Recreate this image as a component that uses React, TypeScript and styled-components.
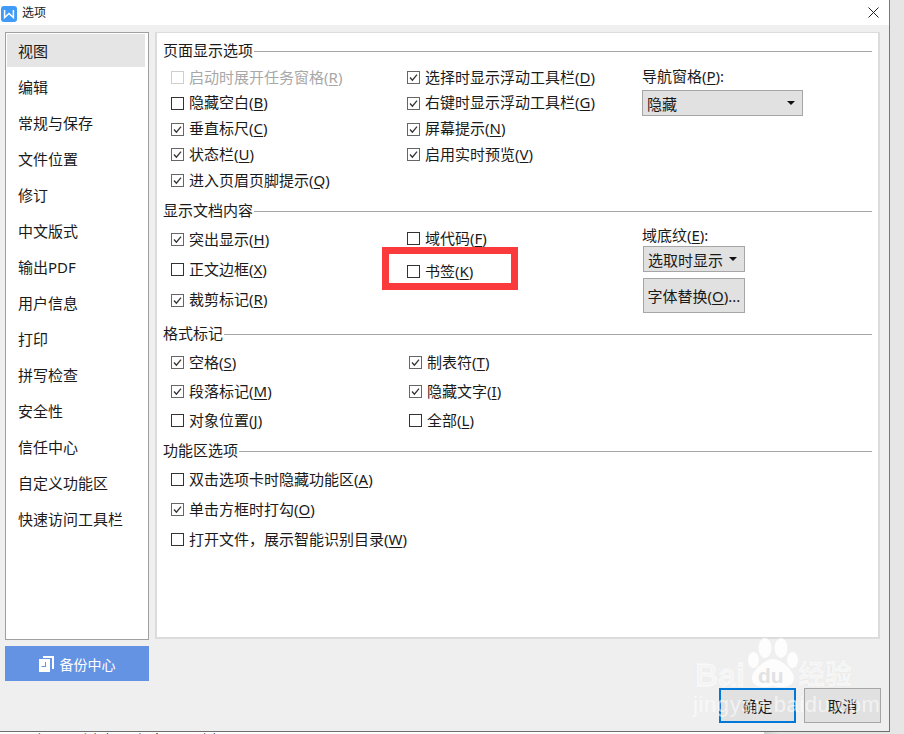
import React from "react";
import styled, { createGlobalStyle } from "styled-components";

const Global = createGlobalStyle`
  html, body { margin: 0; padding: 0; background: #e6e6e6; }
  body { font-family: "Noto Sans", "Noto Sans CJK SC", sans-serif; color: #1a1a1a; }
  * { box-sizing: border-box; }
`;

const Screen = styled.div`
  position: relative;
  width: 904px;
  height: 734px;
  overflow: hidden;
  display: flex;
  flex-direction: column;
`;
const Upper = styled.div`
  height: 732px;
  display: flex;
  flex: none;
`;
const Dialog = styled.div`
  width: 890px;
  height: 732px;
  background: #efefef;
  border-right: 1px solid #777;
  border-bottom: 1px solid #6e6e6e;
  display: flex;
  flex-direction: column;
`;
const TitleBar = styled.div`
  height: 25px;
  flex: none;
  background: #fff;
  display: flex;
  align-items: center;
  padding: 0 10px 0 1px;
`;
const AppLogo = styled.svg`
  width: 16px;
  height: 16px;
  margin-top: 2px;
  flex: none;
`;
const TitleText = styled.span`
  margin-left: 5px;
  font-size: 12px;
  line-height: 22px;
  flex: 1;
`;
const Close = styled.svg`
  width: 11px;
  height: 11px;
  flex: none;
`;
const Body = styled.div`
  flex: none;
  display: grid;
  grid-template-columns: 144px 725px;
  column-gap: 6px;
  padding: 7px 0 0 5px;
  align-content: start;
`;
const Sidebar = styled.nav`
  height: 608px;
  background: #fff;
  border: 1px solid #a0a0a0;
  padding: 1px;
  display: flex;
  flex-direction: column;
`;
const NavItem = styled.div<{ $active?: boolean }>`
  height: ${(p) => (p.$active ? "33px" : "36px")};
  margin-bottom: ${(p) => (p.$active ? "1px" : "0")};
  margin-right: 2px;
  padding: 1px 0 0 11px;
  font-size: 15px;
  line-height: ${(p) => (p.$active ? "33px" : "36px")};
  background: ${(p) => (p.$active ? "#e5e5e5" : "transparent")};
  flex: none;
`;
const Panel = styled.main`
  height: 607px;
  background: #fff;
  border: 2px solid #dcdcdc;
  border-top-width: 1px;
  padding: 8px 6px 0 6px;
  display: flex;
  flex-direction: column;
`;
const Section = styled.section<{ $height: number }>`
  height: ${(p) => p.$height}px;
  flex: none;
`;
const SectionHead = styled.div`
  height: 20px;
  display: flex;
  align-items: center;
  font-size: 15px;
  gap: 1px;
  line-height: 18px;
  & > span {
    margin-top: -3px;
  }
  &::after {
    content: "";
    flex: 1;
    height: 1px;
    background: #a6a6a6;
    margin-top: 1px;
  }
`;
const Columns = styled.div<{ $mid: number }>`
  display: grid;
  grid-template-columns: ${(p) => p.$mid}px ${(p) => 479 - p.$mid}px 1fr;
`;
const Col = styled.div<{ $top: number; $pitch: number }>`
  padding-top: ${(p) => p.$top}px;
  display: grid;
  grid-auto-rows: ${(p) => p.$pitch}px;
`;
const Option = styled.label<{ $off?: boolean }>`
  height: 20px;
  display: flex;
  align-items: center;
  gap: 5px;
  padding-left: 8px;
  font-size: 15px;
  white-space: nowrap;
  color: ${(p) => (p.$off ? "#a8a8a8" : "#1a1a1a")};
`;
const Box = styled.span<{ $on?: boolean; $off?: boolean }>`
  width: 13px;
  height: 13px;
  flex: none;
  display: flex;
  margin-top: 1px;
  border: 1px solid ${(p) => (p.$off ? "#cfcfcf" : p.$on ? "#666" : "#333")};
  background: #fff;
`;
const Tick = styled.svg`
  width: 11px;
  height: 11px;
`;
const Label = styled.span`
  margin-top: -2px;
`;
const Key = styled.span`
  text-decoration: underline;
  text-underline-offset: 2px;
`;
const Side = styled.div<{ $top: number }>`
  padding-top: ${(p) => p.$top}px;
  font-size: 15px;
  display: flex;
  flex-direction: column;
  align-items: flex-start;
`;
const FieldLabel = styled.div`
  height: 20px;
  line-height: 18px;
  white-space: nowrap;
`;
const Select = styled.div<{ $w: number; $ml?: number; $mt: number }>`
  width: ${(p) => p.$w}px;
  height: 26px;
  margin: ${(p) => p.$mt}px 0 0 ${(p) => p.$ml ?? 0}px;
  background: #e1e1e1;
  border: 1px solid #a6a6a6;
  padding: 0 7px 0 4px;
  display: flex;
  align-items: center;
  justify-content: space-between;
  white-space: nowrap;
`;
const Caret = styled.span`
  width: 0;
  height: 0;
  border-left: 4px solid transparent;
  border-right: 4px solid transparent;
  border-top: 4px solid #111;
`;
const ReplaceBtn = styled.div`
  width: 102px;
  height: 35px;
  margin: 6px 0 0 1px;
  background: #e1e1e1;
  border: 1px solid #a6a6a6;
  display: flex;
  align-items: center;
  justify-content: center;
  white-space: nowrap;
`;
const Footer = styled.div`
  display: grid;
  grid-template-columns: 144px 1fr 77px 85px;
  padding: 0 8px 0 5px;
  margin-top: 6px;
`;
const Backup = styled.div`
  width: 144px;
  height: 35px;
  background: #6593e3;
  color: #fff;
  font-size: 14px;
  display: flex;
  align-items: center;
  justify-content: center;
  gap: 6px;
`;
const BackupIcon = styled.svg`
  width: 15px;
  height: 16px;
`;
const ActionBtn = styled.div<{ $primary?: boolean }>`
  height: 35px;
  margin-top: 42px;
  background: #e1e1e1;
  border: ${(p) => (p.$primary ? "2px solid #0078d7" : "1px solid #a6a6a6")};
  display: flex;
  align-items: center;
  justify-content: center;
  font-size: 15px;
`;
const CancelWrap = styled.div`
  margin-left: 8px;
  width: 77px;
`;
const Ground = styled.div`
  height: 2px;
  background: linear-gradient(to right, #fff 764px, #cfcfcf 764px, #e6e6e6 780px);
  overflow: hidden;
  font-size: 15px;
  line-height: 16px;
  white-space: pre;
  color: #222;
  flex: none;
`;
const Highlight = styled.div`
  position: absolute;
  left: 382px;
  top: 247px;
  width: 136px;
  height: 43px;
  border: 7px solid #fb3b3b;
  pointer-events: none;
`;
const Watermark = styled.div`
  position: absolute;
  left: 692px;
  top: 636px;
  width: 190px;
  height: 84px;
  pointer-events: none;
  color: rgba(255, 255, 255, 0.85);
`;
const Bai = styled.span`
  position: absolute;
  left: 3px;
  top: 22px;
  font: bold 32px/34px "Liberation Sans", sans-serif;
  -webkit-text-stroke: 1.5px rgba(255, 255, 255, 0.6);
  text-shadow: 0 0 1px rgba(170, 170, 170, 0.8);
`;
const Du = styled.span`
  position: absolute;
  left: 66px;
  top: 28px;
  font: bold 21px/24px "Liberation Sans", sans-serif;
  color: #e2e2e2;
`;
const Jing = styled.span`
  position: absolute;
  left: 106px;
  top: 21px;
  font: bold 27px/32px "Noto Sans CJK SC", sans-serif;
  -webkit-text-stroke: 1px rgba(255, 255, 255, 0.6);
  text-shadow: 0 0 1px rgba(170, 170, 170, 0.8);
`;
const Domain = styled.span`
  position: absolute;
  left: 1px;
  top: 56px;
  font: 22px/26px "Liberation Sans", sans-serif;
  letter-spacing: 0.6px;
  white-space: nowrap;
  opacity: 0.7;
`;
const Paw = styled.svg`
  position: absolute;
  left: 56px;
  top: 2px;
  width: 50px;
  height: 50px;
`;

type Opt = { t: string; k?: string; on?: boolean; off?: boolean };

const CheckOption = ({ t, k, on, off }: Opt) => (
  <Option $off={off}>
    <Box $on={on} $off={off}>
      {on && (
        <Tick viewBox="0 0 11 11">
          <path d="M2 5.5 L4.4 8.2 L9 2.6" fill="none" stroke="#333" strokeWidth="1.3" />
        </Tick>
      )}
    </Box>
    <Label>
      {t}(<Key>{k}</Key>)
    </Label>
  </Option>
);

const nav = ["视图", "编辑", "常规与保存", "文件位置", "修订", "中文版式", "输出PDF", "用户信息", "打印", "拼写检查", "安全性", "信任中心", "自定义功能区", "快速访问工具栏"];

const s1a: Opt[] = [
  { t: "启动时展开任务窗格", k: "R", off: true },
  { t: "隐藏空白", k: "B" },
  { t: "垂直标尺", k: "C", on: true },
  { t: "状态栏", k: "U", on: true },
  { t: "进入页眉页脚提示", k: "Q", on: true },
];
const s1b: Opt[] = [
  { t: "选择时显示浮动工具栏", k: "D", on: true },
  { t: "右键时显示浮动工具栏", k: "G", on: true },
  { t: "屏幕提示", k: "N", on: true },
  { t: "启用实时预览", k: "V", on: true },
];
const s2a: Opt[] = [
  { t: "突出显示", k: "H", on: true },
  { t: "正文边框", k: "X" },
  { t: "裁剪标记", k: "R", on: true },
];
const s2b: Opt[] = [{ t: "域代码", k: "F" }, { t: "书签", k: "K" }];
const s3a: Opt[] = [
  { t: "空格", k: "S", on: true },
  { t: "段落标记", k: "M", on: true },
  { t: "对象位置", k: "J" },
];
const s3b: Opt[] = [
  { t: "制表符", k: "T", on: true },
  { t: "隐藏文字", k: "I", on: true },
  { t: "全部", k: "L" },
];
const s4: Opt[] = [
  { t: "双击选项卡时隐藏功能区", k: "A" },
  { t: "单击方框时打勾", k: "O", on: true },
  { t: "打开文件，展示智能识别目录", k: "W" },
];

const list = (items: Opt[]) => items.map((o) => <CheckOption key={o.t} {...o} />);

export default function App() {
  return (
    <Screen>
      <Global />
      <Upper>
        <Dialog>
          <TitleBar>
            <AppLogo viewBox="0 0 16 16">
              <rect width="16" height="16" rx="3" fill="#3f9cf6" />
              <path d="M3.6 4 V11.5 L8 7.5 L12.4 11.5 V4" fill="none" stroke="#fff" strokeWidth="1.5" />
            </AppLogo>
            <TitleText>选项</TitleText>
            <Close viewBox="0 0 11 11">
              <path d="M.5 .5 L10.5 10.5 M10.5 .5 L.5 10.5" stroke="#222" strokeWidth="1" />
            </Close>
          </TitleBar>
          <Body>
            <Sidebar>
              {nav.map((n, i) => (
                <NavItem key={n} $active={i === 0}>
                  {n}
                </NavItem>
              ))}
            </Sidebar>
            <Panel>
              <Section $height={160}>
                <SectionHead><span>页面显示选项</span></SectionHead>
                <Columns $mid={236}>
                  <Col $top={6} $pitch={25.75}>{list(s1a)}</Col>
                  <Col $top={6} $pitch={25.75}>{list(s1b)}</Col>
                  <Side $top={6}>
                    <FieldLabel>导航窗格(<Key>P</Key>):</FieldLabel>
                    <Select $w={161} $mt={3}>
                      隐藏
                      <Caret />
                    </Select>
                  </Side>
                </Columns>
              </Section>
              <Section $height={123}>
                <SectionHead><span>显示文档内容</span></SectionHead>
                <Columns $mid={236}>
                  <Col $top={8} $pitch={30.25}>{list(s2a)}</Col>
                  <Col $top={7} $pitch={33}>{list(s2b)}</Col>
                  <Side $top={5}>
                    <FieldLabel>域底纹(<Key>E</Key>):</FieldLabel>
                    <Select $w={102} $ml={1} $mt={0}>
                      选取时显示
                      <Caret />
                    </Select>
                    <ReplaceBtn>字体替换(<Key>O</Key>)...</ReplaceBtn>
                  </Side>
                </Columns>
              </Section>
              <Section $height={117}>
                <SectionHead><span>格式标记</span></SectionHead>
                <Columns $mid={238}>
                  <Col $top={8} $pitch={29}>{list(s3a)}</Col>
                  <Col $top={8} $pitch={29}>{list(s3b)}</Col>
                </Columns>
              </Section>
              <Section $height={120}>
                <SectionHead><span>功能区选项</span></SectionHead>
                <Col $top={8} $pitch={30}>{list(s4)}</Col>
              </Section>
            </Panel>
          </Body>
          <Footer>
            <Backup>
              <BackupIcon viewBox="0 0 15 16">
                <path d="M4 0 H15 V13 H13 V2 H4 Z" fill="#fff" />
                <path d="M0 3 H11 V16 H0 Z M6 6 V10 H2.5 V11 H7 V6 Z" fill="#fff" fillRule="evenodd" />
              </BackupIcon>
              备份中心
            </Backup>
            <span />
            <ActionBtn $primary>确定</ActionBtn>
            <CancelWrap>
              <ActionBtn>取消</ActionBtn>
            </CancelWrap>
          </Footer>
        </Dialog>
      </Upper>
      <Ground>{"回服路 99    例 上承路 由 99    例"}</Ground>
      <Highlight />
      <Watermark>
        <Bai>Bai</Bai>
        <Paw viewBox="0 0 50 50">
          <ellipse cx="17" cy="10" rx="6.5" ry="10" fill="rgba(255,255,255,.85)" />
          <ellipse cx="33" cy="10" rx="6.5" ry="10" fill="rgba(255,255,255,.85)" />
          <ellipse cx="5.5" cy="22" rx="5.5" ry="8" fill="rgba(255,255,255,.85)" />
          <ellipse cx="44.5" cy="22" rx="5.5" ry="8" fill="rgba(255,255,255,.85)" />
          <path d="M25 21 C33 21 47 33 46 41 C45 50 33 50 25 48 C17 50 5 50 4 41 C3 33 17 21 25 21 Z" fill="rgba(255,255,255,.85)" />
        </Paw>
        <Du>du</Du>
        <Jing>经验</Jing>
        <Domain>jingyan.baidu.com</Domain>
      </Watermark>
    </Screen>
  );
}
